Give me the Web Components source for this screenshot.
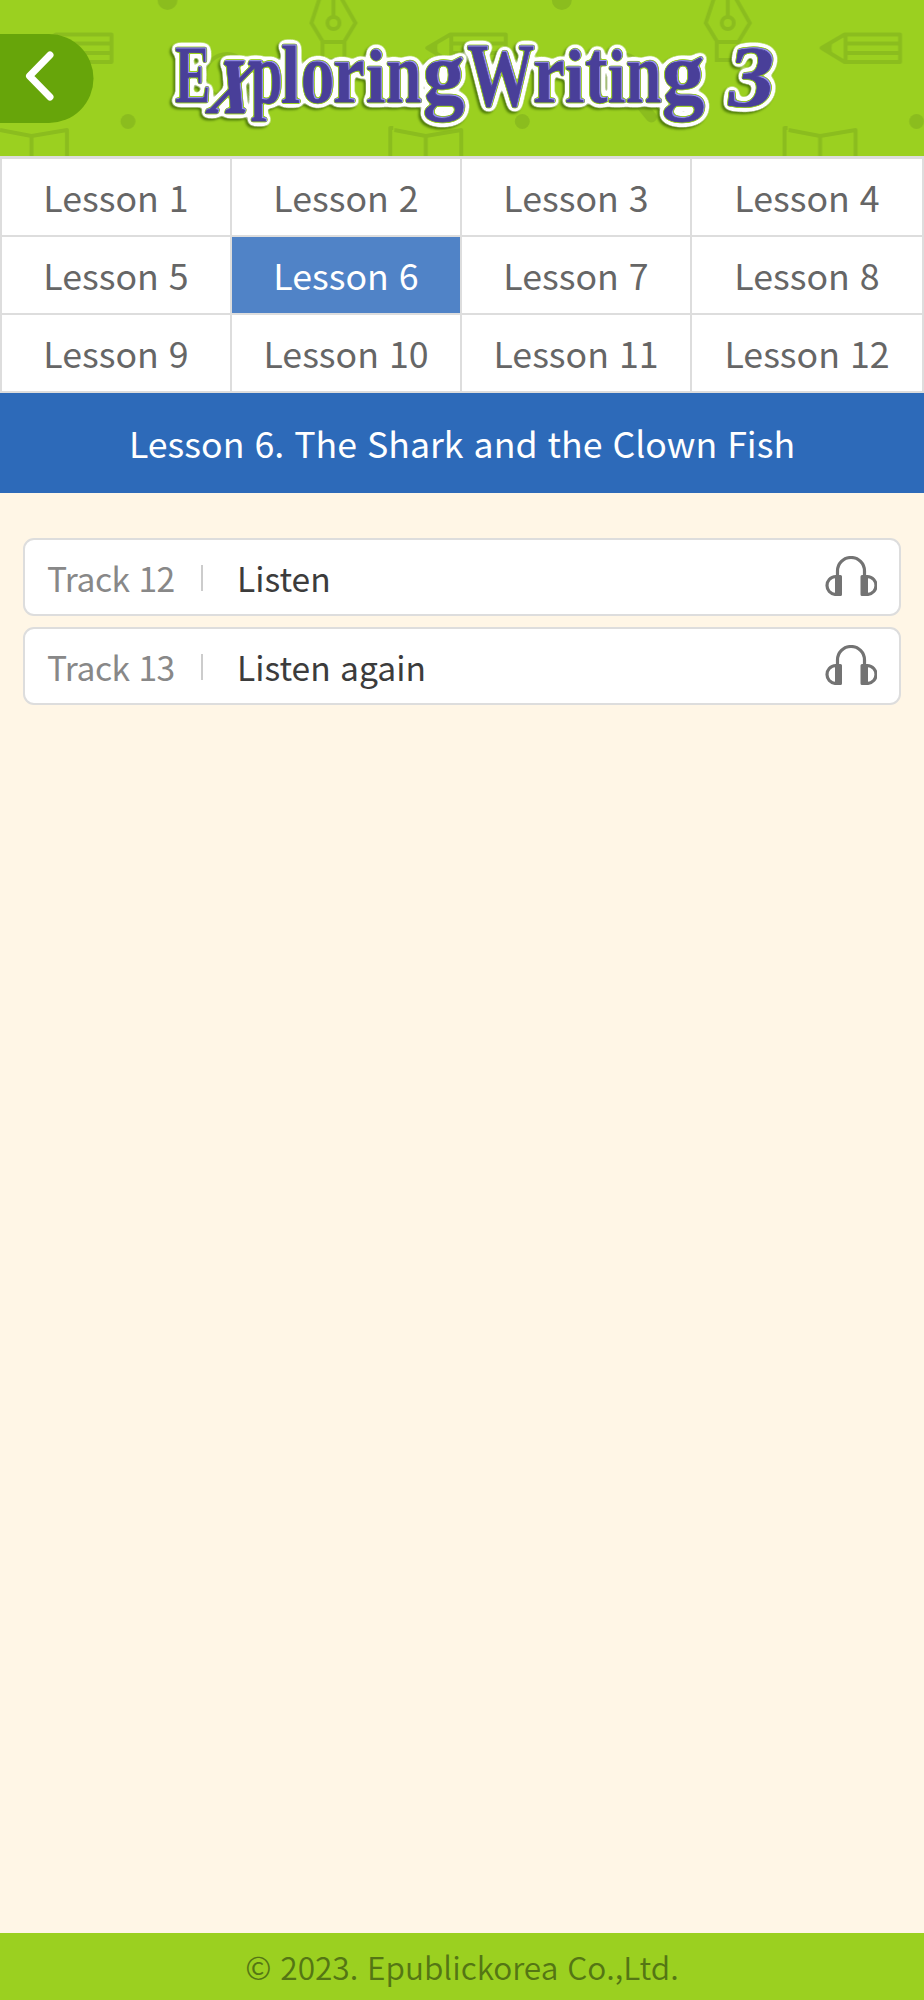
<!DOCTYPE html>
<html lang="ko">
<head>
<meta charset="utf-8">
<title>Exploring Writing 3</title>
<style>
    body {
        margin: 0;
        min-height: 2000px;
        display: flex;
        flex-direction: column;
        background: #fff6e6;
        font-family: "Noto Sans CJK KR", sans-serif;
        font-weight: 400;
    }
    main { flex: 1; }
</style>
</head>
<body>
<book-header></book-header>
<lesson-tabs count="12" current="6"></lesson-tabs>
<lesson-title>Lesson 6. The Shark and the Clown Fish</lesson-title>
<main>
    <track-list>
        <track-item track="Track 12">Listen</track-item>
        <track-item track="Track 13">Listen again</track-item>
    </track-list>
</main>
<page-footer>© 2023. Epublickorea Co.,Ltd.</page-footer>

<script>
// Base class: puts the element's template in an open shadow root
class BaseElement extends HTMLElement {
    constructor() {
        super();
        this.attachShadow({ mode: 'open' });
    }

    connectedCallback() {
        this.shadowRoot.innerHTML = this.template();
    }
}

// Logo letters: [letter, x, baseline, font size, width, skew]
const LOGO = [
    ['E', 175, 102, 83, 36, 0],
    ['x', 205, 113, 114, 40, -20],
    ['p', 251, 102, 86, 32, 0],
    ['l', 281, 102, 82, 20, 0],
    ['o', 301, 102, 86, 34, 0],
    ['r', 333, 102, 86, 32, 0],
    ['i', 366, 102, 76, 20, 0],
    ['n', 386, 102, 86, 36, 0],
    ['g', 423, 103, 88, 42, 0],
    ['W', 467, 106, 92, 68, 0],
    ['r', 533, 102, 86, 32, 0],
    ['i', 565, 102, 76, 20, 0],
    ['t', 585, 102, 90, 23, 0],
    ['i', 608, 102, 76, 18, 0],
    ['n', 626, 102, 86, 36, 0],
    ['g', 662, 103, 88, 43, 0],
    ['3', 724, 106, 88, 47, -9]
];

class BookHeader extends BaseElement {
    letters() {
        return LOGO.map(([ch, x, y, size, width, skew]) =>
            `<text font-size="${size}" textLength="${width}" lengthAdjust="spacingAndGlyphs" transform="translate(${x} ${y}) skewX(${skew})">${ch}</text>`
        ).join('');
    }

    template() {
        return `
            <style>
                :host { display: block; height: 156px; background: #9bd020; }
                svg { display: block; }
                text {
                    font-family: "Liberation Serif", serif;
                    font-weight: bold;
                    fill: #493f99;
                    stroke: #493f99;
                    stroke-width: .8;
                }
            </style>
            <svg width="924" height="156" viewBox="0 0 924 156" role="img">
                <defs>
                    <!-- green rim, white outline and drop shadow round the letters -->
                    <filter id="logo" filterUnits="userSpaceOnUse" x="150" y="20" width="650" height="130" color-interpolation-filters="sRGB">
                        <feGaussianBlur in="SourceAlpha" stdDeviation="3" result="wide"/>
                        <feComponentTransfer in="wide" result="outer"><feFuncA type="linear" slope="18" intercept="-.6"/></feComponentTransfer>
                        <feFlood flood-color="#fff"/>
                        <feComposite in2="outer" operator="in" result="white"/>
                        <feGaussianBlur in="SourceAlpha" stdDeviation="1" result="near"/>
                        <feComponentTransfer in="near" result="inner"><feFuncA type="linear" slope="6" intercept="-.8"/></feComponentTransfer>
                        <feFlood flood-color="#9bd020"/>
                        <feComposite in2="inner" operator="in" result="green"/>
                        <feGaussianBlur in="outer" stdDeviation="1.3"/>
                        <feOffset dx="-2" dy="2" result="below"/>
                        <feFlood flood-color="#4f7b08"/>
                        <feComposite in2="below" operator="in" result="shadow"/>
                        <feOffset in="SourceAlpha" dx="-1.3" dy="1.3" result="moved"/>
                        <feFlood flood-color="#9a94f4"/>
                        <feComposite in2="SourceAlpha" operator="in"/>
                        <feComposite in2="moved" operator="out" result="light"/>
                        <feMerge>
                            <feMergeNode in="shadow"/>
                            <feMergeNode in="white"/>
                            <feMergeNode in="green"/>
                            <feMergeNode in="SourceGraphic"/>
                            <feMergeNode in="light"/>
                        </feMerge>
                    </filter>
                    <pattern id="doodles" width="394.3" height="156" patternUnits="userSpaceOnUse" x="-10">
                        <g fill="none" stroke="#8bbd1e" stroke-width="4">
                            <path d="M43 48 66 34.500H121.500V62H66Z M67 34V62 M67 43.500H121 M67 53H121" stroke-linejoin="round"/>
                            <path d="M41 48 55 39.500Q51 48 55 56.500Z" fill="#8bbd1e" stroke="none"/>
                            <path d="M6 156V128H9 M10 130 41.500 136 77 130V156 M41.500 136V156" stroke-linejoin="round"/>
                            <path d="M331-6 321.500 23 333 42H354L365.500 23 349-6"/>
                            <path d="M343.500-5V17 M332.500 42V60H354.500V42"/>
                            <circle cx="343.500" cy="23" r="6"/>
                            <circle cx="237" cy="76" r="22"/>
                            <path d="M253 100 267 117" stroke-width="11" stroke-linecap="round"/>
                        </g>
                        <circle cx="177.500" cy="0" r="10" fill="#8bbd1e"/>
                        <circle cx="138" cy="121.500" r="7.500" fill="#8bbd1e"/>
                    </pattern>
                </defs>
                <rect width="924" height="156" fill="url(#doodles)"/>
                <path d="M0 34H49A44.500 44.500 0 0 1 49 123H0Z" fill="#67a50a"/>
                <path d="M50 55 29.500 76 50 97" fill="none" stroke="#fff" stroke-width="7" stroke-linecap="round" stroke-linejoin="round"/>
                <g filter="url(#logo)">${this.letters()}</g>
            </svg>
        `;
    }
}

class LessonTabs extends BaseElement {
    template() {
        const count = parseInt(this.getAttribute('count'), 10);
        const current = parseInt(this.getAttribute('current'), 10);
        let cells = '';
        for (let i = 1; i <= count; i++) {
            cells += `<a class="${i === current ? 'on' : ''}">Lesson ${i}</a>`;
        }
        return `
            <style>
                :host {
                    display: grid;
                    grid-template-columns: 228px 228px 228px 230px;
                    grid-auto-rows: 76px;
                    gap: 2px;
                    padding: 3px 2px 2px;
                    background: #ddd;
                }
                a {
                    display: flex;
                    justify-content: center;
                    align-items: center;
                    background: #fff;
                    color: #666;
                    font-size: 35.7px;
                    line-height: 1;
                }
                .on { background: #5083c7; color: #fff; }
            </style>
            ${cells}
        `;
    }
}

class LessonTitle extends BaseElement {
    template() {
        return `
            <style>
                :host {
                    display: flex;
                    justify-content: center;
                    align-items: center;
                    box-sizing: border-box;
                    height: 100px;
                    padding-bottom: 2px;
                    background: #2d6ab9;
                    color: #fff;
                    font-size: 35.7px;
                }
            </style>
            <slot></slot>
        `;
    }
}

class TrackList extends BaseElement {
    template() {
        return `
            <style>
                :host { display: flex; flex-direction: column; gap: 11px; padding: 45px 23px 0; }
            </style>
            <slot></slot>
        `;
    }
}

class TrackItem extends BaseElement {
    template() {
        return `
            <style>
                :host {
                    display: flex;
                    align-items: center;
                    box-sizing: border-box;
                    height: 78px;
                    padding: 0 22px;
                    border: 2px solid #ddd;
                    border-radius: 11px;
                    background: #fff;
                    color: #3c3c3c;
                    font-size: 33.6px;
                    line-height: 1;
                }
                .track, .name { padding-top: 1px; }
                .track { width: 154px; color: #888; letter-spacing: -.5px; }
                .line { width: 2px; height: 26px; margin: 2px 34px 0 0; background: #ccc; }
                .name { flex: 1; }
                svg { margin-bottom: 2px; }
            </style>
            <span class="track">${this.getAttribute('track')}</span>
            <span class="line"></span>
            <span class="name"><slot></slot></span>
            <svg width="52" height="40" viewBox="0 0 52 40" fill="none" stroke="#737373" stroke-width="3.2">
                <path d="M12.500 20V15A13.500 13.500 0 0 1 39.500 15V20"/>
                <path d="M11 20.500C-1 21-1 38 11 38.500M42 20.500C54 21 54 38 42 38.500"/>
                <path d="M10 19H15.500Q17 19 17 20.500V38.500Q17 40 15.500 40H10ZM43 19H37Q35.500 19 35.500 20.500V38.500Q35.500 40 37 40H43Z" fill="#737373" stroke="none"/>
            </svg>
        `;
    }
}

class PageFooter extends BaseElement {
    template() {
        return `
            <style>
                :host {
                    display: flex;
                    justify-content: center;
                    align-items: center;
                    box-sizing: border-box;
                    height: 67px;
                    padding-bottom: 2px;
                    background: #9bd020;
                    color: #547614;
                    font-size: 31.6px;
                    font-weight: 350;
                }
            </style>
            <slot></slot>
        `;
    }
}

customElements.define('book-header', BookHeader);
customElements.define('lesson-tabs', LessonTabs);
customElements.define('lesson-title', LessonTitle);
customElements.define('track-list', TrackList);
customElements.define('track-item', TrackItem);
customElements.define('page-footer', PageFooter);
</script>
</body>
</html>
